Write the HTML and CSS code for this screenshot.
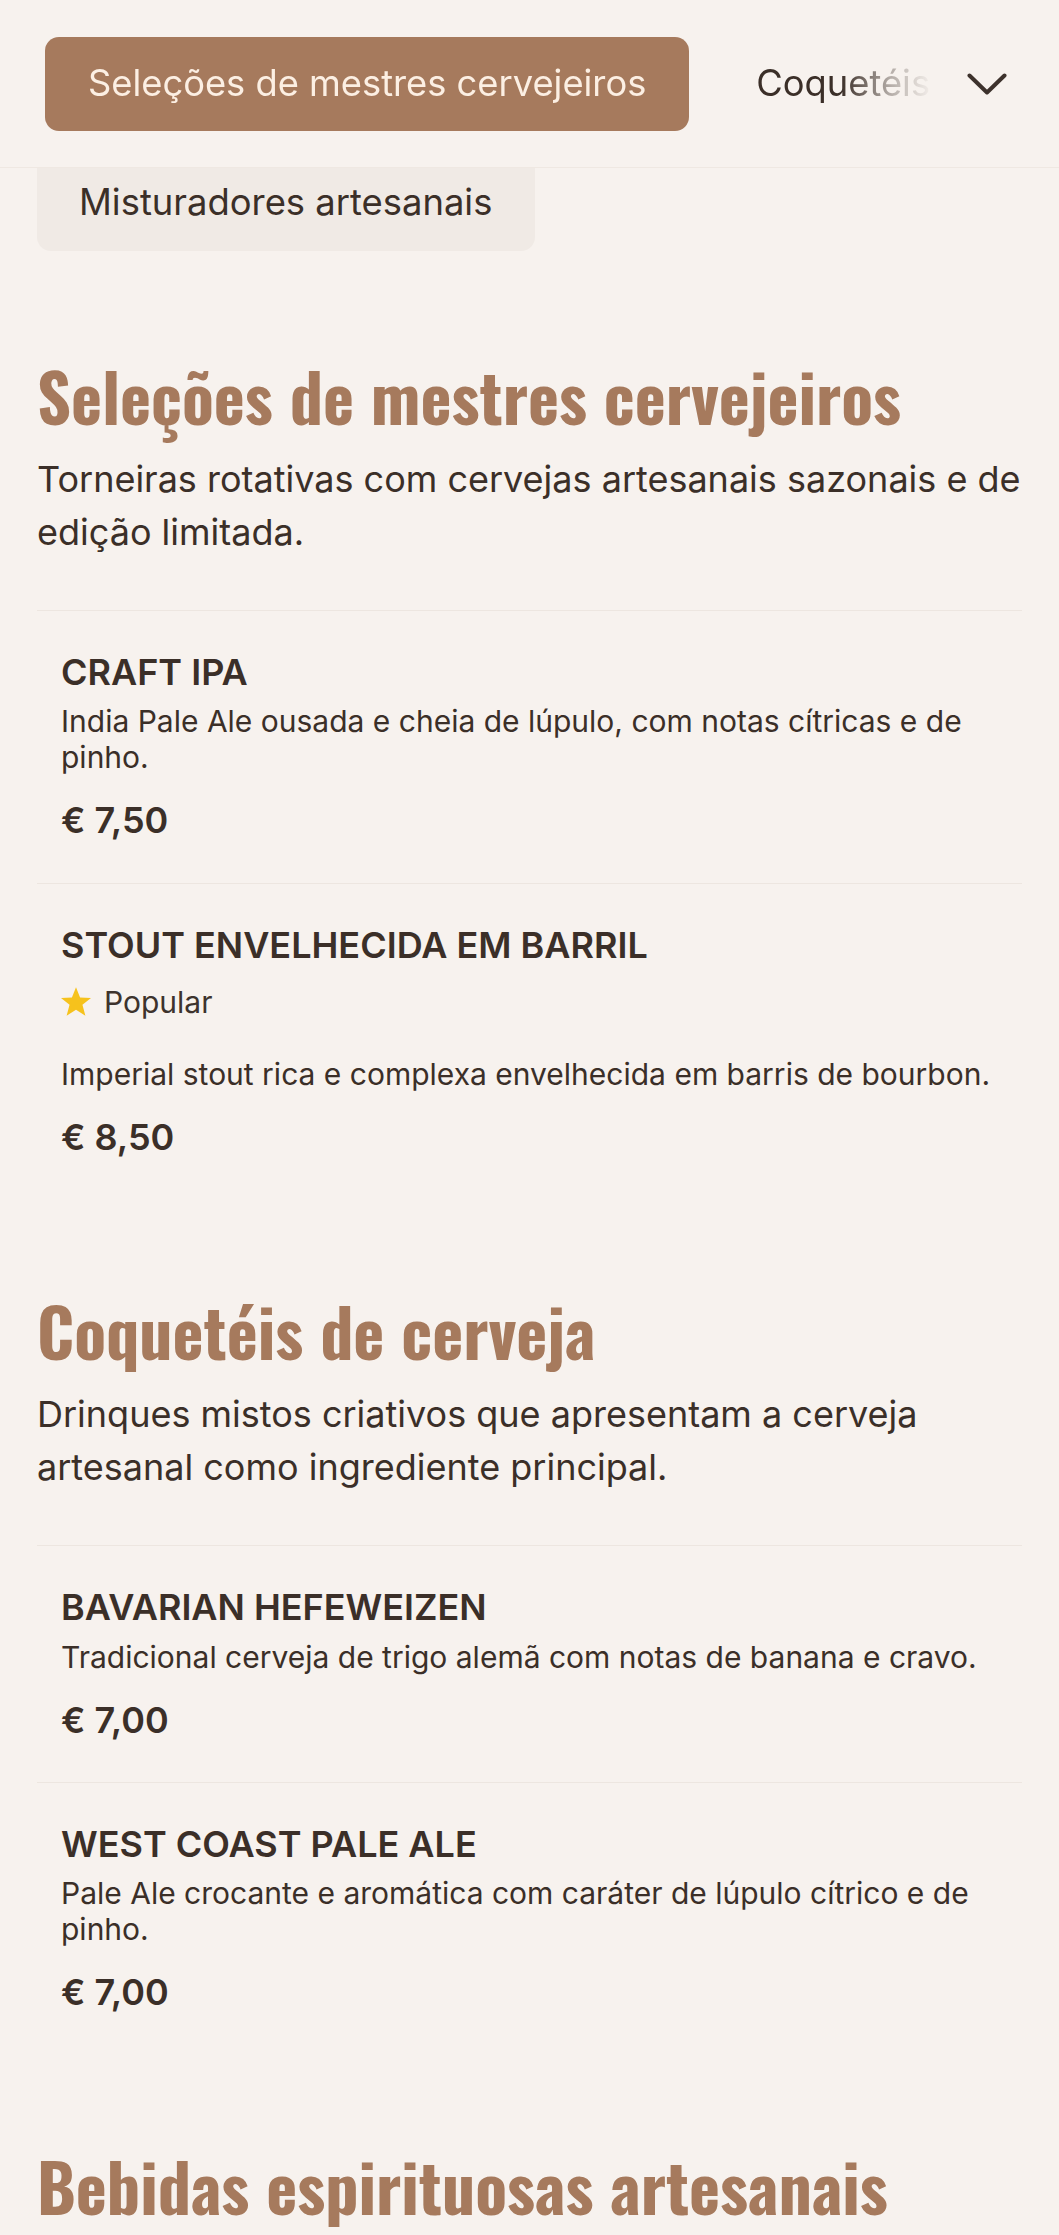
FILE: index.html
```html
<!DOCTYPE html>
<html lang="pt">
<head>
<meta charset="utf-8">
<title>Menu de bebidas</title>
<link rel="stylesheet" href="styles.css">
</head>
<body>
<header class="topbar">
  <nav class="cat-nav">
    <a class="cat-pill is-active" href="#selecoes">Seleções de mestres cervejeiros</a>
    <a class="cat-pill" href="#coqueteis">Coquetéis de cerveja</a>
    <a class="cat-pill" href="#bebidas">Bebidas espirituosas artesanais</a>
  </nav>
  <button class="cat-toggle" type="button" aria-label="Mostrar categorias">
    <svg class="chevron" viewBox="0 0 40 22" width="40" height="22" aria-hidden="true">
      <path d="M2.5 2.5 L20 19.5 L37.5 2.5" fill="none" stroke="#3d322c" stroke-width="4" stroke-linecap="round" stroke-linejoin="round"/>
    </svg>
  </button>
</header>
<div class="cat-more">
  <a class="cat-more-pill" href="#misturadores">Misturadores artesanais</a>
</div>

<main class="menu">
  <section class="menu-section" id="selecoes">
    <h2 class="section-title">Seleções de mestres cervejeiros</h2>
    <p class="section-desc">Torneiras rotativas com cervejas artesanais sazonais e de edição limitada.</p>
    <ul class="item-list">
      <li class="item">
        <h3 class="item-name">CRAFT IPA</h3>
        <p class="item-desc">India Pale Ale ousada e cheia de lúpulo, com notas cítricas e de pinho.</p>
        <div class="item-price">€ 7,50</div>
      </li>
      <li class="item">
        <h3 class="item-name">STOUT ENVELHECIDA EM BARRIL</h3>
        <div class="item-badges">
          <svg class="star" viewBox="1.3 0.8 21.4 20.4" width="30" height="29" aria-hidden="true">
            <path d="M12 0.8 L14.9 8.1 L22.7 8.5 L16.6 13.4 L18.7 21.2 L12 16.8 L5.3 21.2 L7.4 13.4 L1.3 8.5 L9.1 8.1 Z" fill="#f6c21c"/>
          </svg>
          <span class="badge-label">Popular</span>
        </div>
        <p class="item-desc">Imperial stout rica e complexa envelhecida em barris de bourbon.</p>
        <div class="item-price">€ 8,50</div>
      </li>
    </ul>
  </section>

  <section class="menu-section" id="coqueteis">
    <h2 class="section-title">Coquetéis de cerveja</h2>
    <p class="section-desc">Drinques mistos criativos que apresentam a cerveja artesanal como ingrediente principal.</p>
    <ul class="item-list">
      <li class="item">
        <h3 class="item-name">BAVARIAN HEFEWEIZEN</h3>
        <p class="item-desc">Tradicional cerveja de trigo alemã com notas de banana e cravo.</p>
        <div class="item-price">€ 7,00</div>
      </li>
      <li class="item">
        <h3 class="item-name">WEST COAST PALE ALE</h3>
        <p class="item-desc">Pale Ale crocante e aromática com caráter de lúpulo cítrico e de pinho.</p>
        <div class="item-price">€ 7,00</div>
      </li>
    </ul>
  </section>

  <section class="menu-section" id="bebidas">
    <h2 class="section-title">Bebidas espirituosas artesanais</h2>
  </section>
</main>
</body>
</html>
```
FILE: styles.css
```css
* { box-sizing: border-box; }

html, body {
  margin: 0;
  padding: 0;
  background: #f7f2ee;
}

body {
  font-family: Inter, "Noto Sans", sans-serif;
  color: #3b2f28;
}

a { color: inherit; text-decoration: none; }

/* ---------- Top category bar ---------- */
.topbar {
  display: flex;
  align-items: center;
  gap: 26px;
  padding: 37px 52px 36px 45px;
  border-bottom: 1px solid #efe8e2;
  background: #f7f2ee;
}

.cat-nav {
  flex: 1;
  min-width: 0;
  display: flex;
  gap: 24px;
  overflow: hidden;
  -webkit-mask-image: linear-gradient(to right, #000 calc(100% - 100px), rgba(0,0,0,.35) calc(100% - 50px), transparent calc(100% - 8px));
  mask-image: linear-gradient(to right, #000 calc(100% - 100px), rgba(0,0,0,.35) calc(100% - 50px), transparent calc(100% - 8px));
}

.cat-pill {
  flex-shrink: 0;
  display: flex;
  align-items: center;
  height: 94px;
  padding: 0 43px;
  border-radius: 14px;
  font-size: 36.3px;
  line-height: 1.2;
  white-space: nowrap;
  color: #3b2f28;
}

.cat-pill.is-active {
  background: #a67a5d;
  color: #fcefe3;
}

.cat-toggle {
  flex-shrink: 0;
  display: flex;
  align-items: center;
  justify-content: center;
  width: 40px;
  height: 40px;
  padding: 0;
  border: 0;
  background: none;
  cursor: pointer;
}

.chevron { display: block; }

/* second row of categories, tucked under the bar */
.cat-more {
  padding: 0 37px;
  margin-bottom: 13px;
}

.cat-more-pill {
  display: inline-flex;
  align-items: flex-end;
  height: 83px;
  padding: 0 43px 26px 42px;
  border-radius: 0 0 14px 14px;
  background: #f0eae5;
  font-size: 36.4px;
  line-height: 1.2;
  white-space: nowrap;
  color: #3b2f28;
}

/* ---------- Menu ---------- */
.menu {
  padding: 0 37px;
}

.menu-section {
  padding-top: 92px;
}

.section-title {
  margin: 0 0 18px;
  font-family: Oswald, "Roboto Condensed", "Liberation Sans Narrow", sans-serif;
  font-weight: 700;
  font-size: 66px;
  line-height: 1.2;
  color: #a67a5d;
}

.section-desc {
  margin: 0 0 52px;
  font-size: 36px;
  line-height: 1.46;
  color: #3b2f28;
}

.item-list {
  list-style: none;
  margin: 0;
  padding: 0;
}

.item {
  border-top: 1px solid #ede6e0;
  padding: 40px 24px;
}

.item-name {
  margin: 0;
  font-size: 36px;
  font-weight: 600;
  line-height: 1.2;
  color: #3b2f28;
}

.item-desc {
  margin: 9px 0 0;
  font-size: 30px;
  line-height: 1.2;
  color: #3b2f28;
}

.item-price {
  margin-top: 24px;
  font-size: 36px;
  font-weight: 600;
  line-height: 1.2;
  color: #3b2f28;
}

.item-badges {
  display: flex;
  align-items: center;
  gap: 13px;
  margin: 17px 0 36px;
  font-size: 30px;
  line-height: 1.2;
}

.star { display: block; flex-shrink: 0; }

.badge-label { color: #3d332d; }
```
